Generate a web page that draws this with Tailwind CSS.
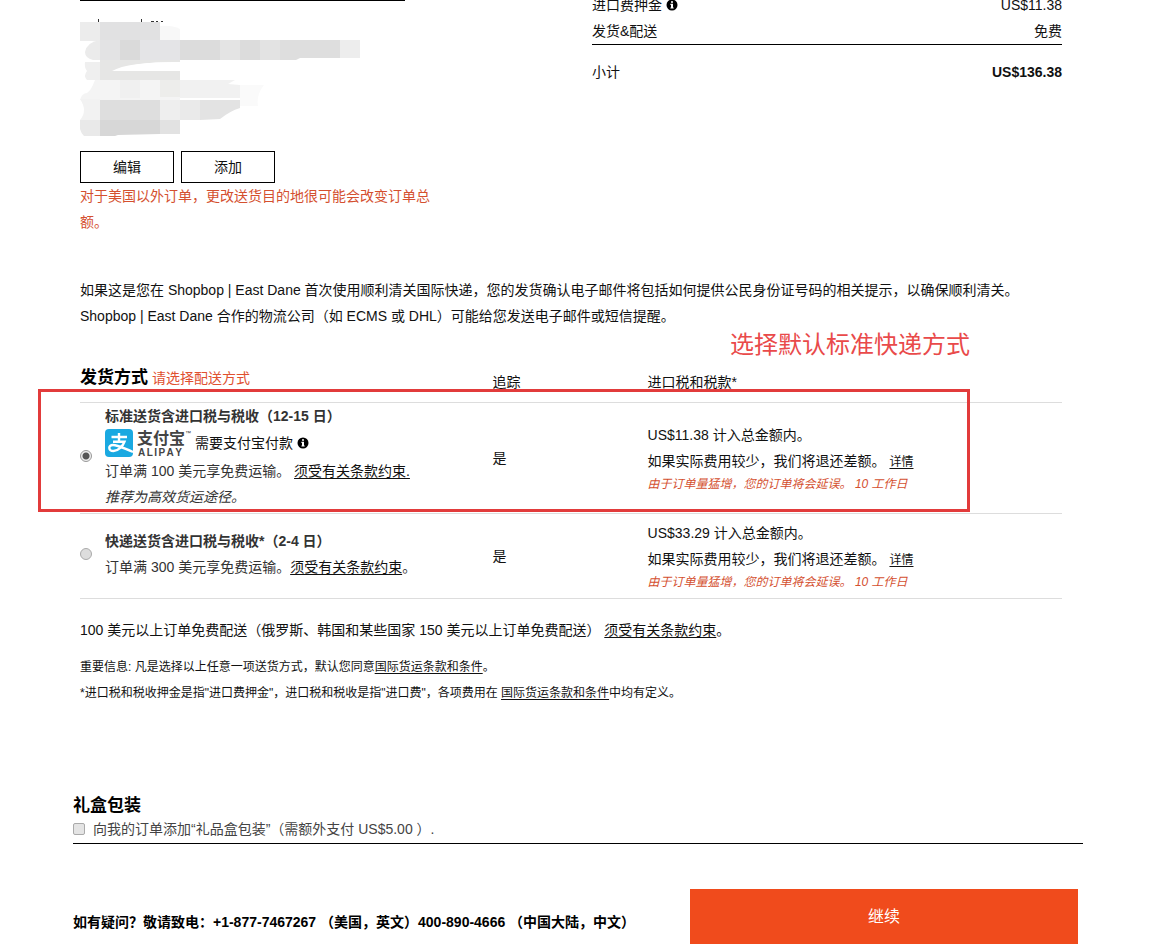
<!DOCTYPE html>
<html lang="zh-CN">
<head>
  <meta charset="UTF-8">
  <title>发货与配送</title>
  <script src="https://cdn.jsdelivr.net/npm/@tailwindcss/browser@4"></script>
</head>
<body class="bg-white font-['Liberation_Sans','Noto_Sans_CJK_SC',sans-serif] text-sm leading-[26px] text-[#111] overflow-x-hidden [text-spacing-trim:space-all]">
  <svg class="hidden">
    <symbol id="info" viewBox="0 0 12 12">
      <circle cx="6" cy="6" r="5.5" fill="#000"/>
      <path d="M5 2.2h2v1.6H5zM4.4 4.8H7v3.6h.7v1.2H4.4V8.4H5V6h-.6z" fill="#fff"/>
    </symbol>
  </svg>

  <main class="pl-[73px] pr-[93px]">
    <div class="pl-[7px] pr-[21px]">

      <!-- Address and order summary -->
      <div class="flex justify-between items-start">
        <section class="w-[356px]">
          <div class="w-[325px] border-t border-black"></div>
          <svg class="block mt-4 w-[280px] h-[120px]" viewBox="0 17 280 120" aria-label="地址">
            <path d="M18 19h1v4h-1zM61 19h1v4h-1zM71 21h3v1h-3zM76 21h2v1h-2zM81 21h2v1h-2z" fill="#333"/>
            <path d="M0 22h20v19H0z" fill="#ececec"/>
            <path d="M20 22h60v18H20z" fill="#e1e1e2"/>
            <path d="M80 26q12-1 20 3v11H80z" fill="#f8f8f8"/>
            <path d="M20 40v20h-7q-8-2-8-8q2-10 15-12z" fill="#ebebeb"/>
            <path d="M20 40h80v22H20z" fill="#e3e3e4"/>
            <path d="M40 40h20v20H40z" fill="#dadada"/>
            <path d="M60 40h40v20H60z" fill="#e4e4e7"/>
            <path d="M100 40h40v20h-40z" fill="#dcdcdc"/>
            <path d="M140 40h20v20h-20z" fill="#e4e4e4"/>
            <path d="M160 40h20v20h-20z" fill="#dcdcdc"/>
            <path d="M180 40h20v20h-20z" fill="#e3e3e3"/>
            <path d="M200 40h60v18h-40l-4 2h-16z" fill="#dedede"/>
            <path d="M260 40h20v18h-20z" fill="#ededed"/>
            <path d="M5 62h15v18H7q-4-4 0-9q-3-4-2-9z" fill="#efefef"/>
            <path d="M20 60h80v2q-50 0-65 9h65v9H20z" fill="#e6e6e5"/>
            <path d="M32 71q15-9 68-9v9z" fill="#fff"/>
            <path d="M15 80h85v20H0q2-7 7-7q4-2 8-13z" fill="#f4f4f4"/>
            <path d="M40 80h20v18H40z" fill="#f0f0f0"/>
            <path d="M80 80h20v17H80z" fill="#ededeb"/>
            <path d="M100 80h55l-7 4 12 1v13h-60z" fill="#f1f1f1"/>
            <path d="M160 85h24q-8 10-6 21h-18z" fill="#fafafa"/>
            <path d="M0 99h20v21H0q8-9 0-21z" fill="#f2f2f2"/>
            <path d="M20 100h60v20H20z" fill="#dedede"/>
            <path d="M80 100h20v20H80z" fill="#eee"/>
            <path d="M100 100h20v20h-20z" fill="#eaeaea"/>
            <path d="M120 100h40v8q-10 3-20 11l-20 1z" fill="#e3e3e3"/>
            <path d="M0 120h20v16H4q-6-6-4-16z" fill="#e9e9e9"/>
            <path d="M20 120h60v14l-42 1-3 1H20z" fill="#d7d7d7"/>
            <path d="M80 120h20v14H80z" fill="#e2e2e2"/>
          </svg>
          <div class="mt-3.5 flex gap-[7px]">
            <button type="button" class="w-[94px] h-8 border border-black leading-[30px]">编辑</button>
            <button type="button" class="w-[94px] h-8 border border-black leading-[30px]">添加</button>
          </div>
          <p class="text-[#d4502f]">对于美国以外订单，更改送货目的地很可能会改变订单总额。</p>
        </section>

        <dl class="w-[470px] -mt-2">
          <div class="flex justify-between">
            <dt class="flex items-center gap-1">进口费押金 <svg class="size-3"><use href="#info"/></svg></dt>
            <dd>US$11.38</dd>
          </div>
          <div class="flex justify-between">
            <dt>发货&amp;配送</dt>
            <dd>免费</dd>
          </div>
          <div class="flex justify-between border-t border-black pt-3.5">
            <dt>小计</dt>
            <dd class="font-semibold">US$136.38</dd>
          </div>
        </dl>
      </div>

      <p class="mt-[42px]">如果这是您在 Shopbop | East Dane 首次使用顺利清关国际快递，您的发货确认电子邮件将包括如何提供公民身份证号码的相关提示，以确保顺利清关。<br>Shopbop | East Dane 合作的物流公司（如 ECMS 或 DHL）可能给您发送电子邮件或短信提醒。</p>

      <!-- Shipping methods -->
      <div class="relative mt-9">
        <table class="w-full table-fixed text-left">
          <thead>
            <tr class="h-[37px] border-b border-[#ddd] align-top">
              <th class="w-[42%] font-normal"><span class="text-[17px] font-bold text-black">发货方式</span> <span class="text-[#e0502f]">请选择配送方式</span></th>
              <th class="w-[15.8%] pt-1 font-normal">追踪</th>
              <th class="w-[42.2%] pt-1 font-normal">进口税和税款*</th>
            </tr>
          </thead>
          <tbody>
            <tr class="border-b border-[#ddd]">
              <td class="pb-[3px]">
                <div class="flex items-center">
                  <input type="radio" name="ship" id="standard" checked class="appearance-none size-3 shrink-0 mr-[13px] rounded-full border border-[#999] bg-[#eee] bg-[radial-gradient(circle,#555_0_3px,transparent_4px)]">
                  <div class="text-[#333]">
                    <label for="standard" class="block font-bold">标准送货含进口税与税收（12-15 日）</label>
                    <div class="flex items-center h-[29px]">
                      <svg class="w-7 h-7 mr-1" viewBox="0 0 28 28">
                        <rect width="28" height="28" rx="4" fill="#1aa9e1"/>
                        <g fill="none" stroke="#fff" stroke-width="2.400">
                          <path d="M6.500 8h15.500M14 4v8.500M8 12.700h11.500c-1.500 4.300-6 9.300-11 9.300-5.500 0-5.500-6-.5-6 5 0 11 3.500 20 7"/>
                        </g>
                      </svg>
                      <div class="w-12 h-7 text-[#444]">
                        <div class="text-base leading-[19px] font-bold">支付宝</div>
                        <div class="flex justify-between w-[46px] px-px text-[10px] leading-[9px] font-semibold"><span>A</span><span>L</span><span>I</span><span>P</span><span>A</span><span>Y</span></div>
                      </div>
                      <span class="self-start w-[10px] text-[6px] leading-[8px]">™</span>
                      <span class="text-[#111]">需要支付宝付款</span>
                      <svg class="size-3 ml-1"><use href="#info"/></svg>
                    </div>
                    <p>订单满 100 美元享免费运输。 <a href="#" class="text-[#111] underline underline-offset-2">须受有关条款约束.</a></p>
                    <p class="italic">推荐为高效货运途径。</p>
                  </div>
                </div>
              </td>
              <td>是</td>
              <td>
                <p>US$11.38 计入总金额内。</p>
                <p>如果实际费用较少，我们将退还差额。 <a href="#" class="text-xs underline underline-offset-2">详情</a></p>
                <p class="text-xs leading-5 italic text-[#d4502f]">由于订单量猛增，您的订单将会延误。 10 工作日</p>
              </td>
            </tr>
            <tr class="h-[85px] border-b border-[#ddd]">
              <td class="pb-1">
                <div class="flex items-center">
                  <input type="radio" name="ship" id="express" class="appearance-none size-3 shrink-0 mr-[13px] rounded-full border border-[#aaa] bg-[#ddd]">
                  <div class="text-[#333]">
                    <label for="express" class="block font-bold">快递送货含进口税与税收*（2-4 日）</label>
                    <p>订单满 300 美元享免费运输。<a href="#" class="text-[#111] underline underline-offset-2">须受有关条款约束</a>。</p>
                  </div>
                </div>
              </td>
              <td>是</td>
              <td>
                <p>US$33.29 计入总金额内。</p>
                <p>如果实际费用较少，我们将退还差额。 <a href="#" class="text-xs underline underline-offset-2">详情</a></p>
                <p class="text-xs leading-5 italic text-[#d4502f]">由于订单量猛增，您的订单将会延误。 10 工作日</p>
              </td>
            </tr>
          </tbody>
        </table>

        <!-- Callout over the default method -->
        <div class="absolute -left-[42px] right-[92px] top-6 h-[123px] border-3 border-[#e23b3b] pointer-events-none"></div>
        <p class="absolute left-[650px] -top-9 text-2xl leading-8 whitespace-nowrap text-[#e94a4a]">选择默认标准快递方式</p>
      </div>

      <p class="mt-[18px]">100 美元以上订单免费配送（俄罗斯、韩国和某些国家 150 美元以上订单免费配送） <a href="#" class="underline underline-offset-2">须受有关条款约束</a>。</p>
      <div class="mt-[11px] text-xs leading-[26px]">
        <p>重要信息: 凡是选择以上任意一项送货方式，默认您同意<a href="#" class="underline underline-offset-2">国际货运条款和条件</a>。</p>
        <p>*进口税和税收押金是指"进口费押金"，进口税和税收是指"进口费"，各项费用在 <a href="#" class="underline underline-offset-2">国际货运条款和条件</a>中均有定义。</p>
      </div>
    </div>

    <!-- Gift box -->
    <section class="mt-[88px] pb-[3px] border-b border-black">
      <h2 class="text-[17px] leading-6 font-bold text-black">礼盒包装</h2>
      <div class="flex items-center leading-[22px] text-[#444]">
        <input type="checkbox" id="gift" class="appearance-none size-3 mr-2 rounded-xs border border-[#aaa] bg-[#e4e4e4]">
        <label for="gift">向我的订单添加“礼品盒包装”（需额外支付 US$5.00 ）.</label>
      </div>
    </section>

    <div class="mt-[45px] flex justify-between pr-[5px]">
      <p class="pt-5 font-bold text-black">如有疑问？敬请致电：+1-877-7467267 （美国，英文）400-890-4666 （中国大陆，中文）</p>
      <button type="button" class="w-[388px] h-14 bg-[#f04b1c] text-base text-white">继续</button>
    </div>
  </main>
</body>
</html>
